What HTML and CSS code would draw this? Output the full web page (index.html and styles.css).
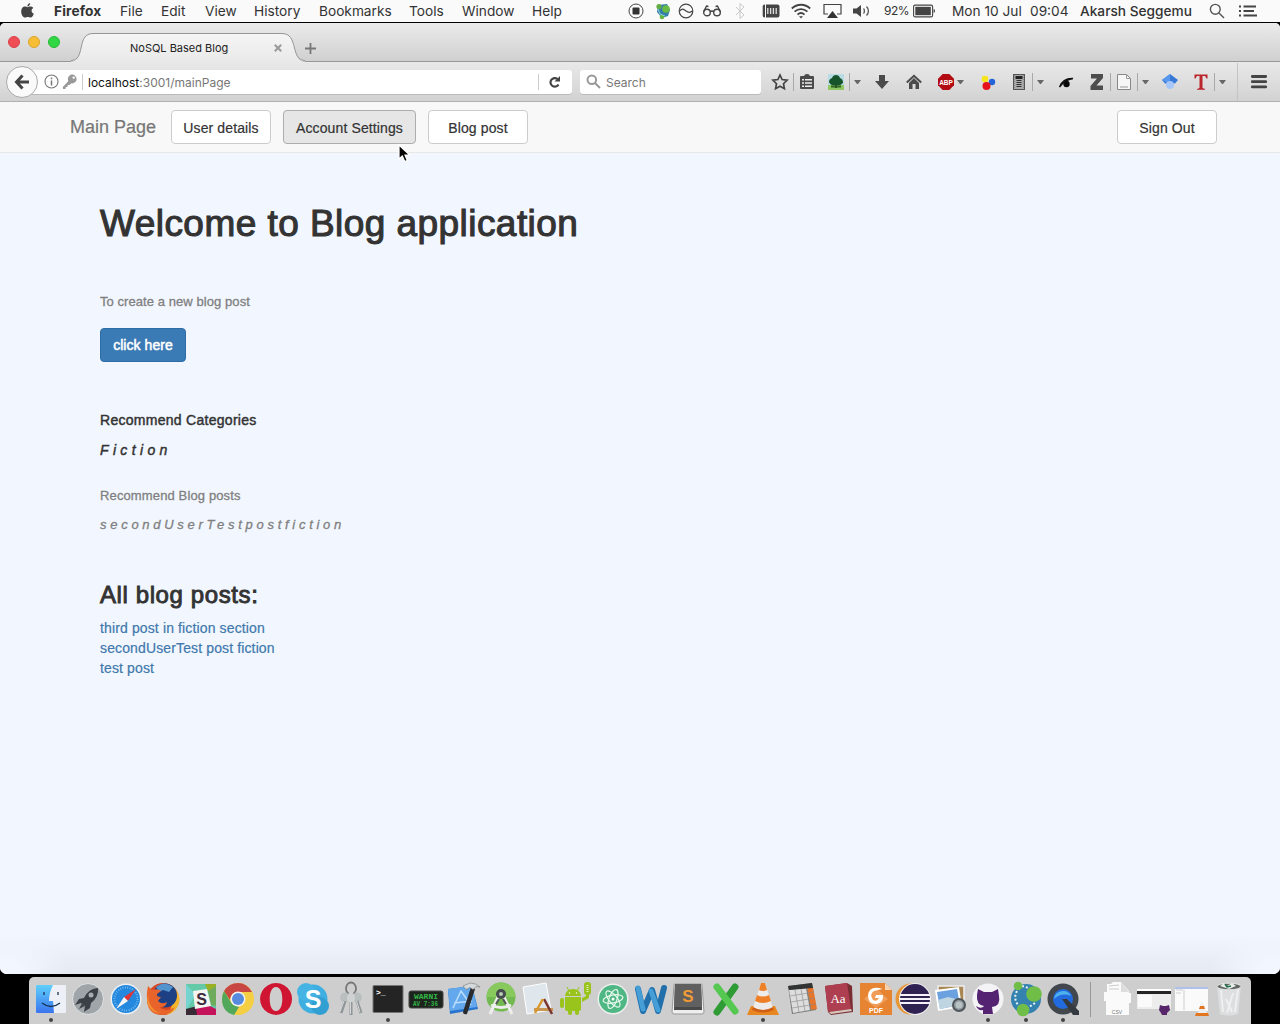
FILE: index.html
```html
<!DOCTYPE html>
<html lang="en">
<head>
<meta charset="utf-8">
<title>NoSQL Based Blog</title>
<link rel="stylesheet" href="styles.css">
</head>
<body>
<header class="menubar">
  <svg class="apple" viewBox="0 0 14 16"><path d="M9.900 0C10 1.800 8.600 3.700 6.900 3.700 6.700 2 8.200.3 9.900 0zM7.200 4.500C8 4.500 8.800 3.800 10.200 3.800c1.200 0 2.300.6 3 1.600-2.700 1.600-2.200 5 .6 6.100-.5 1.500-1.900 4.100-3.400 4.100-1.200 0-1.600-.7-3-.7s-1.900.7-3 .7C2.300 15.600.2 12.400.2 9c0-3.300 2-5.200 4-5.200 1.300 0 2.200.7 3 .7z"/></svg>
  <nav class="menus"><b>Firefox</b><span>File</span><span>Edit</span><span>View</span><span>History</span><span>Bookmarks</span><span>Tools</span><span>Window</span><span>Help</span></nav>
  <div class="extras">
    <svg width="16" height="16" viewBox="0 0 16 16"><circle cx="8" cy="8" r="7" fill="none" stroke="#444"/><rect x="4.500" y="4.500" width="7" height="7" rx="1" fill="#333"/></svg>
    <svg width="16" height="18" viewBox="0 0 16 18"><path d="M3 3l9-1 3 6-2 6-6 2-5-6z" fill="#347fa9"/><circle cx="4" cy="4.500" r="2.600" fill="#62ad43"/><circle cx="11" cy="7" r="3.800" fill="#6abb43"/><circle cx="7" cy="15" r="2.300" fill="#61b83c"/><path d="M3 7l2 5 5 2" fill="none" stroke="#8ed3db"/></svg>
    <svg width="16" height="16" viewBox="0 0 16 16" fill="none" stroke="#444" stroke-width="1.200"><circle cx="8" cy="8" r="6.800"/><path d="M1.500 8c3-3 4-2 6.500 0s4 2 6.500 0"/></svg>
    <svg width="18" height="16" viewBox="0 0 18 16" fill="none" stroke="#444" stroke-width="1.400"><circle cx="4" cy="9.500" r="3.300"/><circle cx="14" cy="9.500" r="3.300"/><path d="M7.200 9c1-1.300 2.600-1.300 3.600 0M.8 8.500L3.500 3l2 .5M17.200 8.500L14.500 3l-2 .5"/></svg>
    <svg width="11" height="16" viewBox="0 0 11 16" fill="none" stroke="#c9c9c9"><path d="M1 4l8 8-4 3.500V.5L9 4l-8 8"/></svg>
    <svg width="18" height="16" viewBox="0 0 18 16"><rect x=".7" y="1.500" width="16.800" height="13" rx="2" fill="#444"/><path d="M3.500 1v14" stroke="#fafafa"/><path d="M5.800 5v6M8.600 5v6M11.400 5v6M14.200 5v6" stroke="#ddd" stroke-width="1.300"/></svg>
    <svg width="20" height="16" viewBox="0 0 20 16" fill="none" stroke="#444" stroke-width="1.800"><path d="M.8 5.500c5.200-5 13.200-5 18.400 0M3.600 8.700c3.700-3.500 9.100-3.500 12.800 0M6.500 11.600c2.100-2 4.900-2 7 0"/><path d="M8 13.200h4l-2 2.300z" fill="#444" stroke="none"/></svg>
    <svg width="19" height="16" viewBox="0 0 19 16"><path d="M5 11H1V1.500h17V11h-4" fill="none" stroke="#444" stroke-width="1.200"/><path d="M9.500 8l5.500 7H4z" fill="#333"/></svg>
    <svg width="18" height="16" viewBox="0 0 18 16"><path d="M0 5.500h3.500L8 2v12l-4.500-3.500H0z" fill="#444"/><path d="M10.500 5.500c1.200 1.200 1.200 3.800 0 5M13.500 3.500c2.600 2.600 2.600 6.400 0 9" fill="none" stroke="#555" stroke-width="1.300"/></svg>
    <span class="percent">92%</span>
    <svg width="23" height="14" viewBox="0 0 23 14"><rect x=".6" y="1.100" width="19" height="11.800" rx="1.500" fill="none" stroke="#444" stroke-width="1.100"/><rect x="2.300" y="2.800" width="15.500" height="8.400" fill="#444"/><path d="M20.700 4.800q2.800 2.200 0 4.400z" fill="#444"/></svg>
    <span class="date">Mon 10 Jul</span><span class="time">09:04</span><span class="user">Akarsh Seggemu</span>
    <svg width="16" height="16" viewBox="0 0 16 16" fill="none" stroke="#555" stroke-width="1.400"><circle cx="6.300" cy="6.300" r="4.900"/><path d="M10 10l5 5"/></svg>
    <svg width="19" height="14" viewBox="0 0 19 14" stroke="#444" stroke-width="1.800"><path d="M0 2.500h2M4.500 2.500H17M0 7h2M4.500 7H15M0 11.500h2M4.500 11.500H18"/></svg>
  </div>
</header>

<div class="window">
  <div class="tabstrip">
    <div class="lights"><i class="red"></i><i class="yellow"></i><i class="green"></i></div>
    <div class="tab">
      <svg class="tab-shape" width="232" height="30" viewBox="0 0 232 30"><defs><linearGradient id="tabfill" x2="0" y2="1"><stop offset="0" stop-color="#f5f5f5"/><stop offset="1" stop-color="#e9e9e9"/></linearGradient></defs><path d="M0 29.500C15 29.500 5 1.500 22 1.500H211C228 1.500 219 29.500 234 29.500V30H0z" fill="url(#tabfill)"/><path d="M0 28.500C15 28.500 5 1.500 22 1.500H211C228 1.500 219 28.500 234 28.500" fill="none" stroke="#969696"/></svg>
      <span class="tab-title">NoSQL Based Blog</span>
      <svg class="tab-close" width="8" height="8" viewBox="0 0 8 8"><path d="M.8.8l6.400 6.400M7.200.8L.8 7.200" stroke="#999" stroke-width="2"/></svg>
    </div>
    <svg class="plus" width="11" height="11" viewBox="0 0 11 11"><path d="M5.500 0v11M0 5.500h11" stroke="#777" stroke-width="1.800"/></svg>
  </div>

  <div class="toolbar">
    <div class="back"><svg width="16" height="16" viewBox="0 0 16 16" fill="none" stroke="#444" stroke-width="3"><path d="M8.500 1.500L2.500 8l6 6.500M3 8h12"/></svg></div>
    <div class="urlbar">
      <svg width="15" height="15" viewBox="0 0 15 15"><circle cx="7.500" cy="7.500" r="6.500" fill="none" stroke="#777" stroke-width="1.100"/><path d="M7.500 6.500v5M7.500 3.500v1.700" stroke="#777" stroke-width="1.500"/></svg>
      <svg width="15" height="16" viewBox="0 0 15 16"><path d="M9 5.500L1 13.500V15h2.500v-2h2v-2h2l2-2" fill="#999"/><path d="M1.500 14L9 6" stroke="#999" stroke-width="2.500"/><circle cx="10.200" cy="5" r="4.400" fill="#999"/><circle cx="11.700" cy="3.600" r="1.200" fill="#fff"/></svg>
      <span class="url"><em>localhost</em>:3001/mainPage</span>
      <svg class="reload" width="13" height="14" viewBox="0 0 13 14"><path d="M10.500 9.500A4.300 4.300 0 1 1 9.500 4" fill="none" stroke="#444" stroke-width="2.200"/><path d="M12 1v5.500H6.500z" fill="#444"/></svg>
    </div>
    <div class="search"><svg width="15" height="15" viewBox="0 0 15 15" fill="none" stroke="#999" stroke-width="2"><circle cx="5.800" cy="5.800" r="4.300"/><path d="M9 9l5 5"/></svg><span>Search</span></div>
    <div class="tools">
      <svg width="18" height="18" viewBox="0 0 18 18"><path d="M9 2l2.100 4.500 5 .7-3.600 3.500.9 5L9 13.300l-4.400 2.400.9-5L1.900 7.200l5-.7z" fill="none" stroke="#444" stroke-width="1.700"/></svg>
      <i class="sep"></i>
      <svg width="16" height="18" viewBox="0 0 16 18"><path d="M1 4q0-1 1-1h3q.5-2 3-2t3 2h3q1 0 1 1v11q0 1-1 1H2q-1 0-1-1z" fill="#4b4b4b"/><path d="M3 6.700h2m1 0h7M3 10h2m1 0h7M3 13.300h2m1 0h7" stroke="#eee" stroke-width="1.500"/></svg>
      <svg width="16" height="16" viewBox="0 0 16 16"><path d="M0 0h16v16H0z" fill="#b8dce5"/><path d="M0 11h16v5H0z" fill="#8fc765"/><path d="M7 9h2v5H7z" fill="#283c18"/><path d="M1 8q0-3 3-4 1-3 4-3t4 3q3 1 3 4.500-1 3-7 3T1 8z" fill="#18542b"/><path d="M3 12.500h10" stroke="#2f6225" stroke-width="2"/></svg>
      <i class="sep"></i><i class="caret"></i>
      <svg width="16" height="16" viewBox="0 0 16 16"><path d="M5 1h6v6h4l-7 8-7-8h4z" fill="#4b4b4b"/></svg>
      <svg width="16" height="16" viewBox="0 0 16 16"><path d="M.8 8.500L8 1.800l7.200 6.700" fill="none" stroke="#4b4b4b" stroke-width="2"/><path d="M3 9l5-5 5 5v6H9.500v-5h-3v5H3z" fill="#4b4b4b"/></svg>
      <svg width="16" height="16" viewBox="0 0 16 16"><path d="M4.700 0h6.600L16 4.700v6.600L11.300 16H4.700L0 11.300V4.700z" fill="#b30b12"/><text x="8" y="10.700" text-anchor="middle" class="abp">ABP</text></svg>
      <i class="caret"></i>
      <svg width="16" height="16" viewBox="0 0 16 16"><circle cx="5" cy="5" r="3.300" fill="#f6e51d"/><circle cx="12" cy="8" r="3.200" fill="#2464d8"/><circle cx="6.500" cy="12" r="4" fill="#e5131c"/></svg>
      <svg width="16" height="16" viewBox="0 0 16 16"><rect x="2.500" y=".5" width="11" height="15" fill="#aaa" stroke="#555"/><path d="M4.500 2h7v3h-7z" fill="#222"/><path d="M5.500 6.500h5M5.500 8.500h5M5.500 10.500h5M5.500 12.500h5" stroke="#333"/><path d="M3.500 1v14M12.500 1v14" stroke="#888" stroke-dasharray="1 1"/></svg>
      <i class="sep"></i><i class="caret"></i>
      <svg width="16" height="16" viewBox="0 0 16 16"><circle cx="8.500" cy="10" r="3.200" fill="#090909"/><path d="M1.500 13Q5 4 15 4.500 7 5.500 1.500 13z" fill="#111" stroke="#111" stroke-width="1.300"/></svg>
      <svg width="16" height="16" viewBox="0 0 16 16"><path d="M2 0h12v4L7.500 11.500H14V16H1.500v-4L8 4.500H2z" fill="#4d4d4d"/></svg>
      <i class="sep"></i>
      <svg width="16" height="16" viewBox="0 0 16 16"><path d="M1.500.5h9l4 4v11h-13z" fill="#f6f6f6" stroke="#888"/><path d="M10.500.5v4h4M4 13h8" stroke="#999" fill="none"/></svg>
      <i class="sep"></i><i class="caret"></i>
      <svg width="16" height="16" viewBox="0 0 16 16"><path d="M8 0l8 6-3 3.500H3L0 6z" fill="#3878d6"/><path d="M8 0v10L0 6z" fill="#5797ec"/><circle cx="8" cy="11" r="4" fill="#a7c7fa"/></svg>
      <svg width="16" height="16" viewBox="0 0 16 16"><path d="M1.500.5h13v4h-1L12 2H9.500v12l2.500 1v.7H4V15l2.500-1V2H4L2.500 4.500h-1z" fill="#bb252c"/></svg>
      <i class="sep"></i><i class="caret"></i><i class="sep tall"></i>
      <svg width="16" height="16" viewBox="0 0 16 16"><path d="M1.300 2.500h13.400M1.300 7.700h13.400M1.300 12.900h13.400" stroke="#444" stroke-width="2.800" stroke-linecap="round"/></svg>
    </div>
  </div>

  <nav class="navbar">
    <span class="brand">Main Page</span>
    <button class="btn">User details</button><button class="btn wide active">Account Settings</button><button class="btn">Blog post</button><button class="btn signout">Sign Out</button>
  </nav>
  <main class="page">
    <h1>Welcome to Blog application</h1>
    <p class="muted create">To create a new blog post</p>
    <button class="primary">click here</button>
    <p class="category">Recommend Categories</p>
    <p class="category spaced">Fiction</p>
    <p class="muted posts">Recommend Blog posts</p>
    <p class="muted post-name">secondUserTestpostfiction</p>
    <h3>All blog posts:</h3>
    <ul><li><a>third post in fiction section</a></li><li><a>secondUserTest post fiction</a></li><li><a>test post</a></li></ul>
  </main>
</div>

<footer class="dock">
  <div class="app running"><svg viewBox="0 0 36 36"><defs><linearGradient id="finder" x2="0" y2="1"><stop offset="0" stop-color="#5fd0fb"/><stop offset="1" stop-color="#3a74ee"/></linearGradient></defs><rect x="3" y="4" width="30" height="28" rx="1" fill="#edf1f7"/><path d="M4 4h16q-4 8-4 16h4l1 12H4q-1 0-1-1V5q0-1 1-1z" fill="url(#finder)"/><path d="M11 11v3M25 11v3M9 22q9 7 18 0" fill="none" stroke="#183552" stroke-width="1.300"/></svg></div>
  <div class="app"><svg viewBox="0 0 36 36"><circle cx="18" cy="18" r="15.500" fill="#9fa5a9" stroke="#dfe2e4"/><path d="M28 7q-9 0-14 10l-5 1-4 6 6-2 4 3-1 6 6-4 1-5q8-6 7-15z" fill="#3a4046"/><circle cx="21" cy="14" r="2.500" fill="#a8adb0"/><path d="M12 22l-3 6 6-3z" fill="#41484e"/></svg></div>
  <div class="app"><svg viewBox="0 0 36 36"><circle cx="18" cy="18" r="15.500" fill="#edf1f3"/><circle cx="18" cy="18" r="14" fill="#2588df"/><circle cx="18" cy="18" r="11.500" fill="none" stroke="#8acaf0" stroke-width="2" stroke-dasharray=".7 1.700"/><path d="M28 8l-8 12-4-4z" fill="#df3538"/><path d="M8 28l8-12 4 4z" fill="#f5f5f5"/></svg></div>
  <div class="app running"><svg viewBox="0 0 36 36"><circle cx="18" cy="18" r="16" fill="#d8451f"/><path d="M27 5q8 6 7.500 15-2 11-13 14 9-9 5-29z" fill="#f5b52c"/><circle cx="20" cy="14.500" r="12" fill="#1d3f83"/><path d="M11 6q8-7 17 0l-4 5-6-2-4 2z" fill="#5394cf"/><path d="M3 5l4 4q5-2 9 1l-4 3q-1 3 4 3l-3 4q4 4 9 1-1 6-8 5 7 6 16 0-4 8-13 8Q5 34 2.500 23 1 13 3 5z" fill="#e8642a"/><path d="M4 9q-2 8 1 14 3 7 11 9-12 0-14-12z" fill="#f29035"/></svg></div>
  <div class="app"><svg viewBox="0 0 36 36"><path d="M3 3h30v31H3z" fill="#63c9a6"/><path d="M22 3h11v9l-8-2z" fill="#9baf23"/><path d="M25 10l8-5v20l-5-1z" fill="#6fab5c"/><path d="M3 28l11-3 2 9H3z" fill="#382b35"/><path d="M13 26l12-2 8 4v6H14z" fill="#c5135b"/><path d="M3 3l9 10-7 14H3z" fill="#75d4cf"/><path d="M10 10l14-2 4 17-16 3z" fill="#f4f4f1"/><text x="18.500" y="24" text-anchor="middle" class="slack">S</text></svg></div>
  <div class="app"><svg viewBox="0 0 36 36"><circle cx="18" cy="18" r="16" fill="#f4ce43"/><path d="M4 10Q9 2 18 2t14 9H18q-7 0-8 8z" fill="#c94743"/><path d="M4 10l8 13 7 3-5 8Q2 31 2 18q0-4 2-8z" fill="#51a85b"/><circle cx="18" cy="18" r="7.500" fill="#f3f3f3"/><circle cx="18" cy="18" r="6" fill="#568bdd"/></svg></div>
  <div class="app"><svg viewBox="0 0 36 36"><path fill-rule="evenodd" d="M18 2a16 16 0 1 0 .1 0zM18 6c4.500 0 6.300 6 6.300 12S22.500 30 18 30s-6.300-6-6.300-12S13.500 6 18 6z" fill="#cf1531"/></svg></div>
  <div class="app"><svg viewBox="0 0 36 36"><circle cx="18" cy="18" r="14.500" fill="#3eafe0"/><circle cx="11" cy="11" r="9" fill="#45b4e5"/><circle cx="25" cy="25" r="9" fill="#329fd3"/><text x="18" y="27" text-anchor="middle" class="skype">S</text></svg></div>
  <div class="app"><svg viewBox="0 0 36 36"><ellipse cx="18" cy="7.500" rx="5" ry="6" fill="none" stroke="#777" stroke-width="1.800"/><g fill="#b9bebf"><ellipse cx="12" cy="16.500" rx="4.800" ry="5"/><ellipse cx="24" cy="16.500" rx="4.800" ry="5"/><ellipse cx="18" cy="17" rx="4" ry="5.500" fill="#cfd2d3"/></g><path d="M12 20L8 32M24 20l4 12M18 21v13" stroke="#8f9698" stroke-width="3"/><path d="M11 20L7 31M23.500 20l3.500 11M17.500 21v12" stroke="#d5d7d8"/></svg></div>
  <div class="app running"><svg viewBox="0 0 36 36"><rect x="3" y="4.500" width="30" height="27" rx="1" fill="#242424" stroke="#777"/><text x="6" y="14" class="prompt">&gt;_</text></svg></div>
  <div class="app"><svg viewBox="0 0 36 36"><rect x="1" y="10" width="34" height="17" rx="2" fill="#1c241d" stroke="#454545"/><text x="6" y="17.500" class="console" textLength="24" lengthAdjust="spacingAndGlyphs">WARNI</text><text x="5" y="25" class="console" textLength="25" lengthAdjust="spacingAndGlyphs">AV 7:36</text></svg></div>
  <div class="app"><svg viewBox="0 0 36 36"><path d="M3 8l24-3 6 23-28 5z" fill="#2874cd"/><path d="M3 8l24-3 5 21-27 4z" fill="#63a8ec"/><path d="M8 27l8-17 10 14M9 22l18-2" fill="none" stroke="#b8dcff" stroke-width="1.600"/><path d="M26 6l4 2-8 25q-4 1-4-2z" fill="#282a2d"/><path d="M18 5l7-3q6 0 10 4l-4-.5-3 3-3-2-4 2z" fill="#d6dadd" stroke="#777" stroke-width=".6"/></svg></div>
  <div class="app"><svg viewBox="0 0 36 36"><circle cx="18" cy="16" r="14.500" fill="#71b950"/><path d="M3.500 16a14.500 14.500 0 0 1 29 0z" fill="#88c95e"/><path d="M16 14L7 33M20 14l9 19M8 24q10 5 20 0" fill="none" stroke="#eee" stroke-width="3"/><circle cx="18" cy="13" r="5" fill="#444a4d"/><circle cx="18" cy="13" r="2" fill="#bacbb5"/><path d="M16 18l-3 5M20 18l3 5" stroke="#555" stroke-width="2"/></svg></div>
  <div class="app"><svg viewBox="0 0 36 36"><path d="M3 6l23-4 5 27-24 4z" fill="#dfe7ec" stroke="#fff"/><path d="M14 27h19v3H14z" fill="#c99654"/><path d="M24 18l8 15" stroke="#7a342b" stroke-width="2.500"/><path d="M23 18l-8 14" stroke="#d9982b" stroke-width="2.500"/></svg></div>
  <div class="app"><svg viewBox="0 0 36 36"><g fill="#98c41c"><path d="M7 15q1-7 8-7t8 7z"/><path d="M7 16h16v12q0 2-2 2H9q-2 0-2-2z"/><rect x="2" y="17" width="4" height="10" rx="2"/><rect x="10" y="27" width="4" height="7" rx="2"/><rect x="17" y="27" width="4" height="7" rx="2"/><path d="M24 21l7-4v-5h-3v3l-4 2z"/><rect x="26" y="1" width="7" height="13" rx="3"/></g><path d="M9 6l2 4M21 6l-2 4" stroke="#98c41c"/><circle cx="11.500" cy="12" r=".7" fill="#fff"/><circle cx="18.500" cy="12" r=".7" fill="#fff"/><path d="M29.500 4v7" stroke="#e2f0ba" stroke-width="2" stroke-dasharray="1 1"/></svg></div>
  <div class="app"><svg viewBox="0 0 36 36"><circle cx="18" cy="18" r="15.500" fill="#eee"/><circle cx="18" cy="18" r="14" fill="#4fb783"/><g fill="none" stroke="#e9f8ee" stroke-width="1.200"><ellipse cx="18" cy="18" rx="4" ry="10" transform="rotate(20 18 18)"/><ellipse cx="18" cy="18" rx="4" ry="10" transform="rotate(80 18 18)"/><ellipse cx="18" cy="18" rx="4" ry="10" transform="rotate(140 18 18)"/></g><circle cx="18" cy="18" r="1.500" fill="#fff"/></svg></div>
  <div class="app"><svg viewBox="0 0 36 36"><path d="M5 8l5 22 9-21 6 21L31 7" fill="none" stroke="#2170ac" stroke-width="6" stroke-linejoin="round" stroke-linecap="round"/><path d="M5 7l5 21M18 10l7 19" stroke="#459ed5" stroke-width="5" stroke-linecap="round"/></svg></div>
  <div class="app"><svg viewBox="0 0 36 36"><path d="M4 4q0-1 1-1h26q1 0 1 1l2 27q0 2-2 2H4q-2 0-2-2z" fill="#eee" stroke="#999"/><path d="M5 3h26l1 26H4z" fill="#484848"/><path d="M5 3h26l.9 23H4.100z" fill="#606060"/><text x="18" y="21" text-anchor="middle" class="sublime">S</text></svg></div>
  <div class="app"><svg viewBox="0 0 36 36"><path d="M27 6L9 31" stroke="#2f9b35" stroke-width="7" stroke-linecap="round"/><path d="M9 6l18 24" stroke="#54c851" stroke-width="7" stroke-linecap="round"/></svg></div>
  <div class="app running"><svg viewBox="0 0 36 36"><path d="M6 25h24l4 9H2z" fill="#e88720"/><path d="M16 2h4l8 25q-10 5-20 0z" fill="#eeeceb"/><path d="M16 2h4l2 7q-4 2-8 0zM12 14q6 3 12 0l2 6q-8 4-16 0z" fill="#ee8028"/><path d="M8 26q10 6 20 0l1 3q-11 5-22 0z" fill="#cf5e17"/></svg></div>
  <div class="app"><svg viewBox="0 0 36 36"><path d="M5 5l24-3 4 27-24 4z" fill="#777"/><path d="M6 9l17-2 4 22-17 3z" fill="#ddd"/><path d="M24 7l6-1 4 22-6 1z" fill="#e7752b"/><path d="M5 5l24-3 1 5L6 9z" fill="#303332"/><path d="M7 15l24-4M8 21l24-4M9 27l24-4M12 9l4 22M18 8l4 22M24 7l4 22" stroke="#888" stroke-width=".6"/></svg></div>
  <div class="app"><svg viewBox="0 0 36 36"><path d="M5 5l22-3 5 3 1 26-22 3-3-3z" fill="#792e34"/><path d="M5 5l22-3 4 26-23 3z" fill="#ae3f50"/><path d="M9 31l22-3 1 2-21 3z" fill="#d8c8bc"/><text x="18" y="22" text-anchor="middle" class="dict">Aa</text></svg></div>
  <div class="app"><svg viewBox="0 0 36 36"><path d="M2 2h25l7 7v25H2z" fill="#e68431"/><path d="M27 2l7 7h-7z" fill="#f6d2af"/><path d="M18 7l12 11-12 9L6 18z" fill="#ef9d58"/><path d="M24.500 8q-13-4-14.500 6 0 10 9 9 7-2 6-9h-7l-1 3h4q-2 4-6 2-4-6 1-9 4-1 8.500-2z" fill="#fff"/><text x="18" y="31.500" text-anchor="middle" class="pdf">PDF</text></svg></div>
  <div class="app"><svg viewBox="0 0 36 36"><circle cx="16" cy="18" r="15.500" fill="#e89737"/><circle cx="20" cy="18" r="16" fill="#eee"/><circle cx="20" cy="18" r="15" fill="#302153"/><path d="M5 14h30M4 18h32M5 22h30" stroke="#f4f1fa" stroke-width="2"/></svg></div>
  <div class="app"><svg viewBox="0 0 36 36"><path d="M5 5h26v19H5z" fill="#a88753" stroke="#eee" stroke-width="1.500"/><path d="M2 9l24-3 3 20-24 4z" fill="#fff"/><path d="M4 11l20-3 3 16-20 4z" fill="#6ba1df"/><path d="M5 19l10-3 12 3v5L7 28z" fill="#c0d5e2"/><circle cx="26" cy="24" r="6" fill="#8f999e" stroke="#50575a" stroke-width="2"/><circle cx="26" cy="24" r="3.500" fill="#b8c1c4"/></svg></div>
  <div class="app running"><svg viewBox="0 0 36 36"><circle cx="18" cy="18" r="15.500" fill="#f4f3f6"/><path d="M8 8l6 3h8l6-3 1 7q2 10-7 11l1 7H13v-4q-5 1-7-4 4 3 7 1l1-1q-8-1-7-11z" fill="#542371"/></svg></div>
  <div class="app running"><svg viewBox="0 0 36 36"><circle cx="18" cy="18" r="15" fill="#3482b0"/><path d="M9 10q-5 9 4 17M14 5l10 3M27 22l-9 6" fill="none" stroke="#e8f1f4" stroke-width="2" stroke-dasharray="2 2"/><circle cx="10" cy="5" r="4.300" fill="#70bd48"/><circle cx="26" cy="13" r="7.800" fill="#70bd48"/><circle cx="15" cy="29" r="6.300" fill="#70bd48"/></svg></div>
  <div class="app running"><svg viewBox="0 0 36 36"><circle cx="18" cy="18" r="15.500" fill="#42474e"/><circle cx="18" cy="18" r="10" fill="#226bdf"/><path d="M9 18a9 9 0 0 1 17-3q-9-4-17 3z" fill="#4eb1ec"/><path d="M17 18h5l12 12v4h-6z" fill="#353a40"/></svg></div>
  <i class="dock-separator"></i>
  <div class="app"><svg viewBox="0 0 36 36"><path d="M8 3h4l2-2h8l8 9v2h2v10h-2v12H7V20H5v-9h3z" fill="#fafafa"/><path d="M22 1v10h8" fill="#ddd"/><path d="M10 5l10-1M10 8h10" stroke="#ccc"/><text x="18" y="33" text-anchor="middle" class="csv">CSV</text></svg></div>
  <div class="app"><svg viewBox="0 0 36 36"><path d="M1 8h34v20H1z" fill="#ededed"/><path d="M1 8h34v2H1z" fill="#fff"/><path d="M1 10h34v3H1z" fill="#252525"/><path d="M2 14h14v12H2z" fill="#fafafa"/><path d="M24 24l3 1h3l3-1 1 5-3 3v2h-5l-1-2-2-3z" fill="#57266a"/></svg></div>
  <div class="app"><svg viewBox="0 0 36 36"><path d="M1 6h33v24H1z" fill="#fafafa"/><path d="M1 6h33v2H1z" fill="#adc1eb"/><path d="M2 9h7M2 12h5M10 9v20" stroke="#ccc"/><path d="M27 22h2l4 10h-9z" fill="#eee"/><path d="M22 32h12l1 3H21zM26 25h4l1 3h-6z" fill="#e27520"/></svg></div>
  <div class="app"><svg viewBox="0 0 36 36"><path d="M6 5h24l-3 28q-9 3-18 0z" fill="#dcdedf"/><path d="M10 9l2 22M15 18l6 13M22 12l-6 20M27 8l-3 23" stroke="#efefef" stroke-width="2"/><ellipse cx="18" cy="5.500" rx="12" ry="3.300" fill="#626766" stroke="#e6e6e6"/><path d="M9 5l4-3 3 3 5-3 4 3-7 3z" fill="#e8eee8"/><path d="M14 3l2 3 4-1" fill="none" stroke="#246a4d" stroke-width="1.500"/></svg></div>
</footer>
<svg class="cursor" width="14" height="20" viewBox="0 0 14 20"><path d="M1 1v14l3.300-3 2.500 5.500 2.500-1.100L7 11h4.700z" fill="#050505" stroke="#fff" stroke-width="1.200"/></svg>
</body>
</html>
```
FILE: styles.css
```css
* { box-sizing: border-box; }
body { margin: 0; width: 1280px; height: 1024px; overflow: hidden; background: #000; display: flex; flex-direction: column; align-items: center; font-family: "Liberation Sans", Arial, sans-serif; }
svg { display: block; flex: none; overflow: visible; }
button { font: inherit; }
.menubar { width: 1280px; height: 22px; flex: none; background: #fafafa; display: flex; align-items: center; font: 13.7px/22px Inter, sans-serif; color: #333; padding-left: 21px; }
.apple { width: 13px; height: 15px; fill: #444; margin-top: -2px; }
.menus { margin-left: 20px; width: 574px; display: grid; grid-template-columns: 66px 41px 44px 49px 65px 90px 53px 70px 50px; white-space: nowrap; }
.menus b { letter-spacing: .15px; }
.extras { display: grid; align-items: center; white-space: nowrap; grid-template-columns: 27px 23px 25px 32px 27px 29px 32px 30px 31px 29px 39px 78px 50px 129px 30px 22px; }
.percent { font-size: 12px; letter-spacing: -.5px; }
.user { font-weight: 500; }
.window { width: 1280px; height: 951px; flex: none; margin-top: 1px; background: #f2f7ff; border-radius: 5px 5px 7px 7px; overflow: hidden; display: flex; flex-direction: column; }
.tabstrip { height: 39px; flex: none; display: flex; align-items: flex-start; background: linear-gradient(#ebebeb, #d0d0d0); border-bottom: 1px solid #989898; padding-left: 8px; }
.lights { display: flex; gap: 8px; margin-top: 13px; width: 63px; }
.lights i { width: 12px; height: 12px; border-radius: 50%; flex: none; }
.red { background: #f04d55; border: 1px solid #d94149; }
.yellow { background: #f7bd35; border: 1px solid #dca42c; }
.green { background: #32d745; border: 1px solid #27b936; }
.tab { width: 232px; height: 30px; margin-top: 9px; position: relative; display: flex; align-items: center; }
.tab-shape { position: absolute; left: 0; top: 0; }
.tab-title { position: relative; margin-left: 59px; width: 144px; font: 11px/30px Inter, sans-serif; padding-top: 1px; color: #222; }
.tab-close { position: relative; margin-top: 2px; }
.plus { margin: 20px 0 0 2px; }
.toolbar { height: 40px; flex: none; display: flex; align-items: center; background: linear-gradient(#e9e9e9, #d2d2d2); border-bottom: 1px solid #b0b0b0; padding-left: 6px; }
.back { position: relative; z-index: 1; width: 32px; height: 32px; margin-right: -8px; border: 1px solid #aaa; border-radius: 50%; background: #fafafa; display: flex; align-items: center; justify-content: center; }
.urlbar { width: 542px; height: 24px; padding-left: 14px; background: #fff; border-radius: 3px; display: flex; align-items: center; gap: 3px; box-shadow: 0 1px #bbb; }
.url { width: 457px; height: 16px; border-left: 1px solid #ccc; border-right: 1px solid #ccc; padding-left: 5px; margin-left: 2px; font: 12px/18px Inter, sans-serif; color: #777; }
.url em { color: #111; font-style: normal; }
.reload { margin-left: 6px; }
.search { width: 181px; height: 24px; margin-left: 8px; padding-left: 6px; background: #fff; border-radius: 3px; box-shadow: 0 1px #bbb; display: flex; align-items: center; gap: 5px; font: 12px/24px Inter, sans-serif; color: #777; }
.search span { padding-top: 2px; }
.tools { width: 509px; height: 39px; margin-left: 10px; display: grid; align-items: center; grid-template-columns: 22px 6px 29px 21px 5px 20px 32px 32px 19px 23px 31px 21px 5px 21px 31px 21px 6px 21px 5px 20px 31px 21px 5px 18px 14px 29px; }
.sep { width: 1px; height: 18px; background: #aaa; }
.sep.tall { height: 38px; background: #c4c4c4; }
.caret { border: 3.5px solid transparent; border-top: 4px solid #666; border-bottom: 0; width: 7px; }
.abp { font: bold 6.5px "Liberation Sans", sans-serif; fill: #fff; }
.navbar { height: 51px; flex: none; display: flex; align-items: center; background: #f8f8f8; border-bottom: 1px solid #e7e7e7; padding: 0 63px 0 70px; font-size: 14px; }
.brand { font-size: 18px; color: #777; width: 101px; white-space: nowrap; padding-top: 1px; -webkit-text-stroke: .2px #777; }
.btn { width: 100px; height: 34px; padding: 2px 0 0; margin-right: 12px; border: 1px solid #ccc; border-radius: 4px; background: #fff; color: #333; letter-spacing: .12px; white-space: nowrap; -webkit-text-stroke: .2px #333; }
.btn.wide { width: 133px; }
.btn.active { background: #e6e6e6; border-color: #adadad; }
.btn.signout { margin: 0 0 0 auto; }
.page { flex: 1; padding: 51px 100px 0; background: radial-gradient(ellipse 70px 45px at 0 100%, #f2f7ff 30%, transparent), radial-gradient(ellipse 70px 45px at 100% 100%, #f2f7ff 30%, transparent), linear-gradient(transparent calc(100% - 40px), #e5e9f1); font-size: 14px; line-height: 20px; color: #333; }
.page p { margin: 0; }
.page h1 { margin: 0 0 48px; font-weight: 400; font-size: 37px; line-height: 40px; letter-spacing: .45px; -webkit-text-stroke: 1.1px #333; }
.page .muted { font-size: 13px; color: #808080; -webkit-text-stroke: .3px #808080; }
.page .create { margin-bottom: 16px; letter-spacing: .07px; }
.primary { display: block; width: 86px; height: 34px; padding: 0; background: #3a7ab5; border: 1px solid #2e6da4; border-radius: 4px; color: #fff; letter-spacing: .06px; -webkit-text-stroke: .5px #fff; }
.page .category { margin-top: 48px; letter-spacing: .28px; -webkit-text-stroke: .45px #333; }
.page .spaced { margin-top: 10px; font-style: italic; letter-spacing: 4.35px; }
.page .posts { margin-top: 26px; letter-spacing: .13px; }
.page .post-name { margin-top: 9px; font-style: italic; letter-spacing: 3.72px; }
.page h3 { margin: 47px 0 10px; font-size: 24px; line-height: 26px; font-weight: 400; letter-spacing: .6px; -webkit-text-stroke: .9px #333; }
.page ul { margin: 0; padding: 0; list-style: none; color: #4078ac; letter-spacing: .13px; -webkit-text-stroke: .2px #4078ac; }
.dock { width: 1222px; height: 47px; flex: none; margin-top: 3px; background: #cecece; border-radius: 5px 5px 0 0; display: flex; padding: 4px 0 0 3px; }
.app { width: 37.5px; height: 43px; flex: none; display: flex; flex-direction: column; align-items: center; gap: 1px; }
.app svg { width: 36px; height: 36px; }
.running::after { content: ""; width: 4px; height: 4px; border-radius: 50%; background: #444; }
.dock-separator { width: 1px; height: 35px; background: #999; margin: 1px 7px 0 8px; flex: none; }
.slack { font: bold 16px "Liberation Sans", sans-serif; fill: #3c2739; }
.skype { font: bold 25px "Liberation Sans", sans-serif; fill: #fff; }
.prompt { font: bold 8px "Liberation Mono", monospace; fill: #fff; }
.console { font: bold 7px "Liberation Mono", monospace; fill: #32b746; }
.sublime { font: bold 17px "Liberation Sans", sans-serif; fill: #f29a35; }
.dict { font: 13px "Liberation Serif", serif; fill: #fff; }
.pdf { font: bold 7px "Liberation Sans", sans-serif; fill: #fff; }
.csv { font: 5px "Liberation Sans", sans-serif; fill: #777; }
.cursor { position: absolute; left: 398px; top: 144px; }
```
